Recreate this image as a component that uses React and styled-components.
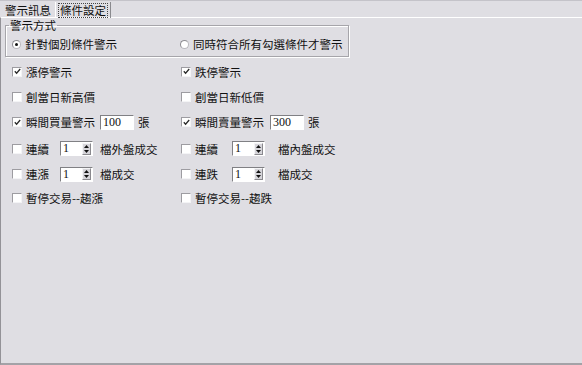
import React from 'react';
import styled, { createGlobalStyle } from 'styled-components';

const GlobalStyle = createGlobalStyle`
    html, body {
        margin: 0;
        padding: 0;
        background: #dfdee3;
    }
    body {
        font-family: "Noto Sans CJK TC", "Noto Sans CJK SC", sans-serif;
        font-size: 11.5px;
        color: #111;
    }
`;

const Window = styled.div`
    width: 582px;
    height: 365px;
    background: #dfdee3;
    display: flex;
    flex-direction: column;
    overflow: hidden;
`;

const TabStrip = styled.div`
    height: 16px;
    border-top: 1px solid #c4c3c9;
    display: flex;
    align-items: stretch;
    padding-left: 1px;
`;

const Tab = styled.div`
    display: flex;
    align-items: center;
    padding: 0 ${props => props.active ? 2 : 4}px;
    line-height: 13px;
    white-space: nowrap;
    border-left: ${props => props.active ? '1px solid #ffffff' : 'none'};
    border-right: ${props => props.active ? '1px solid #8a8a8e' : 'none'};
    position: relative;
    top: 1px;
`;

const FocusRing = styled.span`
    border: 1px dotted #444;
    padding: 0 1px;
    line-height: 13px;
`;

const Panel = styled.div`
    flex: 1;
    border-top: 1px solid #ffffff;
    border-left: 1px solid #939297;
    border-bottom: 2px solid #a3a2a7;
    display: flex;
    flex-direction: column;
`;

const GroupBox = styled.fieldset`
    margin: 1px 0 0 4px;
    width: 344px;
    box-sizing: border-box;
    padding: 3px 0 2px 6px;
    border: 1px solid #a6a5aa;
    box-shadow: inset 1px 1px 0 #ffffff, 1px 1px 0 #ffffff;
`;

const Legend = styled.legend`
    padding: 0 1px;
    margin-left: -3px;
    line-height: 12px;
    height: 12px;
`;

const RadioRow = styled.div`
    height: 20px;
    display: flex;
    align-items: center;
`;

const RadioItem = styled.label`
    display: flex;
    align-items: center;
    width: ${props => props.width ? `${props.width}px` : 'auto'};
    white-space: nowrap;
    line-height: 14px;
`;

const RadioDot = styled.span`
    width: 7px;
    height: 7px;
    border-radius: 50%;
    background: #ffffff;
    border: 1px solid #b8b7bc;
    border-top-color: #8e8d92;
    border-left-color: #8e8d92;
    box-sizing: content-box;
    display: flex;
    align-items: center;
    justify-content: center;
    margin-right: 4px;
    &::after {
        content: '';
        width: 3px;
        height: 3px;
        border-radius: 50%;
        background: ${props => props.checked ? '#111' : 'transparent'};
    }
`;

const Options = styled.div`
    margin-top: 2px;
    padding-left: 11px;
    display: grid;
    grid-template-columns: 169px 1fr;
`;

const Cell = styled.div`
    height: ${props => props.height}px;
    display: flex;
    align-items: center;
    white-space: nowrap;
`;

const Box = styled.span`
    width: 8px;
    height: 8px;
    background: #ffffff;
    border: 1px solid #f4f4f6;
    border-top-color: #9d9ca1;
    border-left-color: #9d9ca1;
    margin-right: 4px;
    display: flex;
    align-items: center;
    justify-content: center;
    flex-shrink: 0;
`;

const Label = styled.span`
    width: ${props => props.width ? `${props.width}px` : 'auto'};
    margin-right: ${props => props.gap || 0}px;
    line-height: 14px;
`;

const TextField = styled.div`
    width: ${props => props.width}px;
    height: 15px;
    box-sizing: border-box;
    background: #ffffff;
    border: 1px solid #ffffff;
    border-top-color: #808084;
    border-left-color: #808084;
    margin-right: ${props => props.gap || 0}px;
    display: flex;
    align-items: center;
    font-family: "Liberation Serif", serif;
    font-size: 12px;
    padding-left: 2px;
    flex-shrink: 0;
`;

const Value = styled.span`
    flex: 1;
`;

const SpinButtons = styled.div`
    width: 9px;
    height: 12px;
    margin-right: 1px;
    background: #d6d5da;
    border: 1px solid #f4f4f6;
    border-right-color: #8a898e;
    border-bottom-color: #8a898e;
    box-sizing: border-box;
    display: flex;
    flex-direction: column;
    align-items: center;
    justify-content: space-between;
    padding: 1px 0;
`;

const Check = () => (
    <svg width="7" height="7" viewBox="0 0 7 7">
        <path d="M0.8 3.2 L2.6 5.2 L6.2 1" fill="none" stroke="#2a2a2a" strokeWidth="1.3" />
    </svg>
);

const Arrow = ({ down }) => (
    <svg width="5" height="3" viewBox="0 0 5 3">
        <path d={down ? 'M0 0 H5 L2.5 3 Z' : 'M0 3 H5 L2.5 0 Z'} fill="#111" />
    </svg>
);

const CheckBox = ({ checked }) => (
    <Box>{checked && <Check />}</Box>
);

const Spinner = ({ value, gap }) => (
    <TextField width={33} gap={gap}>
        <Value>{value}</Value>
        <SpinButtons>
            <Arrow />
            <Arrow down />
        </SpinButtons>
    </TextField>
);

const rowHeights = [25, 25, 26, 27, 24, 24];

const rows = [
    [
        { checked: true, label: '漲停警示' },
        { checked: true, label: '跌停警示' },
    ],
    [
        { label: '創當日新高價' },
        { label: '創當日新低價' },
    ],
    [
        { checked: true, label: '瞬間買量警示', gap: 5, input: '100', unit: '張' },
        { checked: true, label: '瞬間賣量警示', gap: 6, input: '300', unit: '張' },
    ],
    [
        { label: '連續', width: 34, spin: '1', spinGap: 7, suffix: '檔外盤成交' },
        { label: '連續', width: 37, spin: '1', spinGap: 13, suffix: '檔內盤成交' },
    ],
    [
        { label: '連漲', width: 34, spin: '1', spinGap: 7, suffix: '檔成交' },
        { label: '連跌', width: 37, spin: '1', spinGap: 13, suffix: '檔成交' },
    ],
    [
        { label: '暫停交易--趨漲' },
        { label: '暫停交易--趨跌' },
    ],
];

const Option = ({ item, height }) => (
    <Cell height={height}>
        <CheckBox checked={item.checked} />
        <Label width={item.width} gap={item.gap}>{item.label}</Label>
        {item.input && (
            <TextField width={34} gap={4}>
                <Value>{item.input}</Value>
            </TextField>
        )}
        {item.unit && <Label>{item.unit}</Label>}
        {item.spin && <Spinner value={item.spin} gap={item.spinGap} />}
        {item.suffix && <Label>{item.suffix}</Label>}
    </Cell>
);

export default function App() {
    return (
        <Window>
            <GlobalStyle />
            <TabStrip>
                <Tab>警示訊息</Tab>
                <Tab active>
                    <FocusRing>條件設定</FocusRing>
                </Tab>
            </TabStrip>
            <Panel>
                <GroupBox>
                    <Legend>警示方式</Legend>
                    <RadioRow>
                        <RadioItem width={168}>
                            <RadioDot checked />
                            針對個別條件警示
                        </RadioItem>
                        <RadioItem>
                            <RadioDot />
                            同時符合所有勾選條件才警示
                        </RadioItem>
                    </RadioRow>
                </GroupBox>
                <Options>
                    {rows.map((pair, i) => pair.map((item, j) => (
                        <Option key={`${i}-${j}`} item={item} height={rowHeights[i]} />
                    )))}
                </Options>
            </Panel>
        </Window>
    );
}
